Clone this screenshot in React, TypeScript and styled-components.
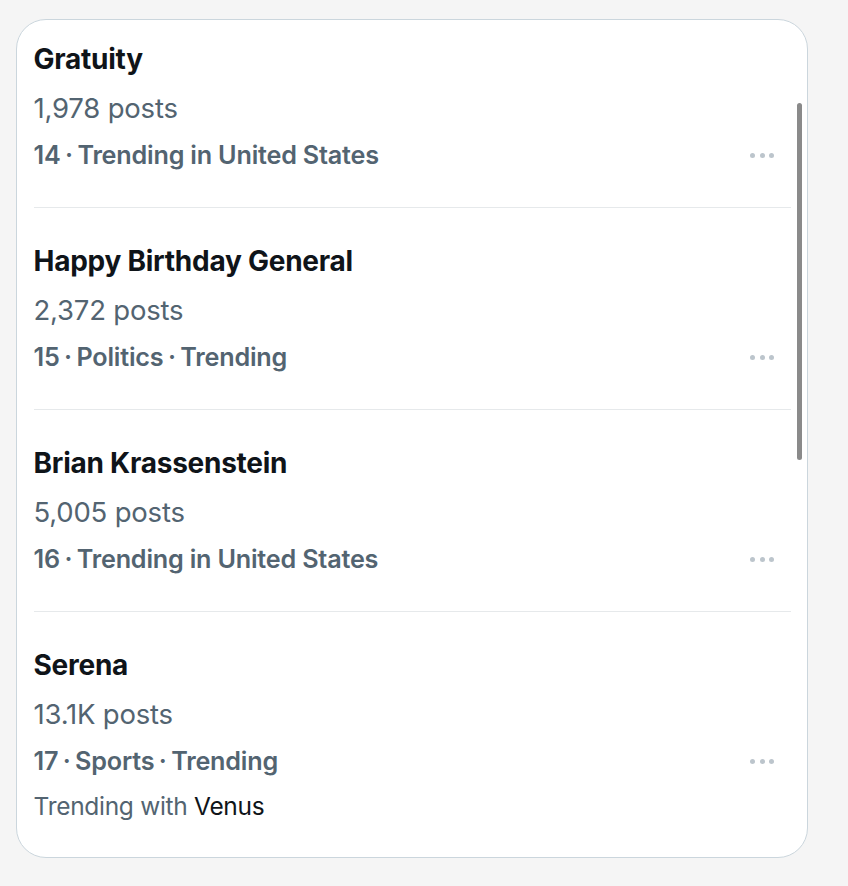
import React from 'react'
import styled, { createGlobalStyle } from 'styled-components'

const GlobalStyle = createGlobalStyle`
  html, body {
    margin: 0;
    padding: 0;
    background: #f5f5f5;
  }
  body {
    font-family: Inter, 'Noto Sans', 'Liberation Sans', sans-serif;
    -webkit-font-smoothing: antialiased;
  }
`

interface Trend {
  name: string
  posts: string
  meta: string[]
  with?: string
}

const trends: Trend[] = [
  { name: 'Gratuity', posts: '1,978 posts', meta: ['14', 'Trending in United States'] },
  { name: 'Happy Birthday General', posts: '2,372 posts', meta: ['15', 'Politics', 'Trending'] },
  { name: 'Brian Krassenstein', posts: '5,005 posts', meta: ['16', 'Trending in United States'] },
  { name: 'Serena', posts: '13.1K posts', meta: ['17', 'Sports', 'Trending'], with: 'Venus' },
]

const Page = styled.div`
  padding: 19px 0 28px 16px;
`

const Card = styled.section`
  position: relative;
  box-sizing: border-box;
  width: 792px;
  background: #fff;
  border: 1.5px solid #cbd6dd;
  border-radius: 30px;
  padding: 0 16px 0 16.5px;
`

const Scrollbar = styled.div`
  position: absolute;
  right: 5px;
  top: 83px;
  width: 5px;
  height: 357px;
  border-radius: 3px;
  background: #8a8a8a;
`

const Row = styled.div<{ $first?: boolean; $last?: boolean }>`
  padding: ${p => (p.$first ? '15px' : '29.5px')} 0 ${p => (p.$last ? '30px' : '27.5px')};
  border-bottom: ${p => (p.$last ? 'none' : '1.5px solid #e6e9eb')};
`

const Title = styled.div`
  font-size: 28px;
  font-weight: 700;
  line-height: 49px;
  color: #0f1419;
  letter-spacing: -0.25px;
`

const Posts = styled.div`
  font-size: 27.5px;
  font-weight: 400;
  line-height: 48px;
  color: #536471;
  letter-spacing: -0.2px;
`

const Meta = styled.div`
  display: flex;
  align-items: center;
  justify-content: space-between;
  font-size: 25.2px;
  font-weight: 600;
  line-height: 47px;
  color: #536471;
  letter-spacing: -0.2px;
`

const Sep = styled.span`
  margin: 0 4.5px;
`

const More = styled.span`
  display: flex;
  gap: 4.5px;
  margin-right: 17px;
`

const Dot = styled.i`
  display: block;
  width: 5px;
  height: 5px;
  border-radius: 50%;
  background: #bcc5cc;
`

const With = styled.div`
  font-size: 24.5px;
  line-height: 42px;
  color: #536471;
  letter-spacing: -0.3px;

  b {
    font-weight: 400;
    color: #0f1419;
  }
`

export default function App() {
  return (
    <Page>
      <GlobalStyle />
      <Card>
        <Scrollbar />
        {trends.map((t, i) => (
          <Row key={t.name} $first={i === 0} $last={i === trends.length - 1}>
            <Title>{t.name}</Title>
            <Posts>{t.posts}</Posts>
            <Meta>
              <span>
                {t.meta.map((m, j) => (
                  <React.Fragment key={m}>
                    {j > 0 && <Sep>·</Sep>}
                    {m}
                  </React.Fragment>
                ))}
              </span>
              <More>
                <Dot />
                <Dot />
                <Dot />
              </More>
            </Meta>
            {t.with && (
              <With>
                Trending with <b>{t.with}</b>
              </With>
            )}
          </Row>
        ))}
      </Card>
    </Page>
  )
}
